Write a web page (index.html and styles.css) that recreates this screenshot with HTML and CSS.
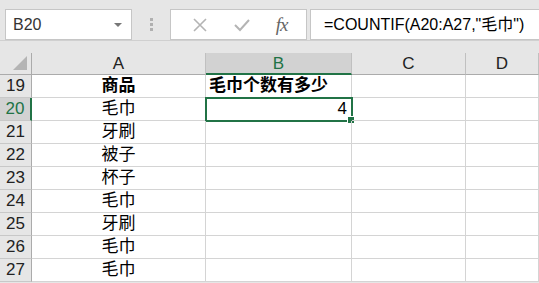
FILE: index.html
```html
<!DOCTYPE html>
<html lang="zh-CN">
<head>
    <meta charset="UTF-8">
    <title>COUNTIF</title>
    <link rel="stylesheet" href="styles.css">
</head>
<body>
    <div class="toolbar">
        <div class="name-box">
            <span>B20</span>
            <span class="caret"></span>
        </div>
        <div class="grip"><i></i><i></i><i></i></div>
        <div class="fx-buttons">
            <svg width="16" height="16" viewBox="0 0 16 16"><path d="M2 2 L14 14 M14 2 L2 14" stroke="#b4b4b4" stroke-width="1.6" fill="none"/></svg>
            <svg width="18" height="16" viewBox="0 0 18 16"><path d="M2 8 L7 13 L16 3" stroke="#b4b4b4" stroke-width="2" fill="none"/></svg>
            <span class="fx">fx</span>
        </div>
        <div class="formula">=COUNTIF(A20:A27,"毛巾")</div>
    </div>
    <div class="sheet">
        <div class="corner"><span class="tri"></span></div>
        <div class="col-head">A</div>
        <div class="col-head active">B</div>
        <div class="col-head">C</div>
        <div class="col-head">D</div>

        <div class="row-head">19</div>
        <div class="cell center bold">商品</div>
        <div class="cell bold">毛巾个数有多少</div>
        <div class="cell"></div>
        <div class="cell"></div>

        <div class="row-head active">20</div>
        <div class="cell center">毛巾</div>
        <div class="cell right selected">4<span class="handle"></span></div>
        <div class="cell"></div>
        <div class="cell"></div>

        <div class="row-head">21</div>
        <div class="cell center">牙刷</div>
        <div class="cell"></div>
        <div class="cell"></div>
        <div class="cell"></div>

        <div class="row-head">22</div>
        <div class="cell center">被子</div>
        <div class="cell"></div>
        <div class="cell"></div>
        <div class="cell"></div>

        <div class="row-head">23</div>
        <div class="cell center">杯子</div>
        <div class="cell"></div>
        <div class="cell"></div>
        <div class="cell"></div>

        <div class="row-head">24</div>
        <div class="cell center">毛巾</div>
        <div class="cell"></div>
        <div class="cell"></div>
        <div class="cell"></div>

        <div class="row-head">25</div>
        <div class="cell center">牙刷</div>
        <div class="cell"></div>
        <div class="cell"></div>
        <div class="cell"></div>

        <div class="row-head">26</div>
        <div class="cell center">毛巾</div>
        <div class="cell"></div>
        <div class="cell"></div>
        <div class="cell"></div>

        <div class="row-head">27</div>
        <div class="cell center">毛巾</div>
        <div class="cell"></div>
        <div class="cell"></div>
        <div class="cell"></div>
    </div>
</body>
</html>
```

FILE: styles.css
```css
* {
    margin: 0;
    padding: 0;
    box-sizing: border-box;
}
body {
    width: 539px;
    height: 283px;
    overflow: hidden;
    background: #e6e6e6;
    font-family: 'Liberation Sans', 'Noto Sans CJK SC', sans-serif;
    color: #000;
}
.toolbar {
    display: flex;
    align-items: flex-start;
    height: 41px;
    padding: 9px 0 0 5px;
    border-bottom: 1px solid #d0d0d0;
}
.name-box {
    width: 127px;
    height: 31px;
    background: #fff;
    border: 1px solid #c6c6c6;
    display: flex;
    align-items: center;
    justify-content: space-between;
    padding: 0 9px 0 7px;
    font-size: 16px;
    color: #333;
}
.caret {
    width: 0;
    height: 0;
    border-left: 4px solid transparent;
    border-right: 4px solid transparent;
    border-top: 4px solid #777;
}
.grip {
    width: 38px;
    height: 31px;
    display: flex;
    flex-direction: column;
    align-items: center;
    justify-content: center;
    gap: 2px;
}
.grip i {
    width: 3px;
    height: 3px;
    background: #b0b0b0;
}
.fx-buttons {
    width: 137px;
    height: 31px;
    background: #fff;
    border: 1px solid #c6c6c6;
    display: flex;
    align-items: center;
    justify-content: space-around;
    padding: 0 6px 0 8px;
}
.fx {
    font-family: 'Liberation Serif', serif;
    font-style: italic;
    font-size: 19px;
    color: #666;
    letter-spacing: -1px;
}
.formula {
    flex: 1;
    height: 31px;
    margin-left: 3px;
    background: #fff;
    border: 1px solid #c6c6c6;
    border-right: none;
    font-size: 16px;
    line-height: 29px;
    padding-left: 13px;
    white-space: nowrap;
    overflow: hidden;
}
.sheet {
    display: grid;
    grid-template-columns: 32px 174px 146px 114px 1fr;
    grid-template-rows: 22px repeat(9, 23px);
    margin-top: 12px;
    background: #fff;
}
.corner {
    background: #e6e6e6;
    border-right: 1px solid #ababab;
    border-bottom: 1px solid #ababab;
    position: relative;
}
.tri {
    position: absolute;
    right: 4px;
    bottom: 4px;
    width: 0;
    height: 0;
    border-left: 14px solid transparent;
    border-bottom: 14px solid #b4b4b4;
}
.col-head {
    background: #e6e6e6;
    border-right: 1px solid #c0c0c0;
    border-bottom: 1px solid #ababab;
    text-align: center;
    font-size: 17px;
    line-height: 21px;
    color: #222;
}
.col-head.active {
    background: #d2d2d2;
    color: #217346;
    border-bottom: 2px solid #217346;
}
.row-head {
    background: #e6e6e6;
    border-right: 1px solid #ababab;
    border-bottom: 1px solid #c8c8c8;
    text-align: center;
    font-size: 17px;
    line-height: 22px;
    color: #222;
}
.row-head.active {
    background: #d2d2d2;
    color: #217346;
    border-right: 2px solid #217346;
}
.cell {
    border-right: 1px solid #d4d4d4;
    border-bottom: 1px solid #d4d4d4;
    font-size: 17px;
    line-height: 22px;
    padding: 0 3px;
    position: relative;
}
.center {
    text-align: center;
}
.right {
    text-align: right;
    font-size: 17px;
}
.bold {
    font-weight: bold;
}
.selected {
    outline: 2px solid #217346;
    outline-offset: -1px;
    padding-right: 4px;
}
.handle {
    position: absolute;
    right: -4px;
    bottom: -4px;
    width: 6px;
    height: 6px;
    background: #217346;
    border: 1px solid #fff;
    box-sizing: content-box;
}
```
